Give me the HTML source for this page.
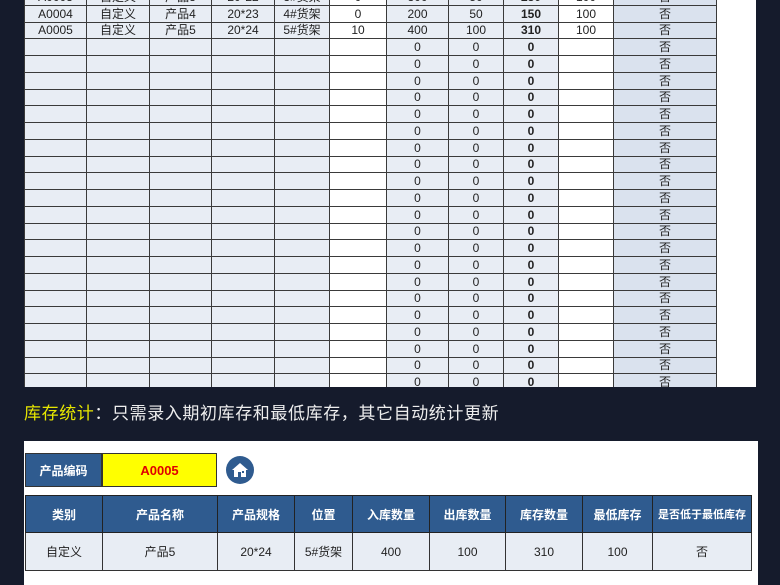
<!DOCTYPE html><html><head><meta charset="utf-8"><style>
*{margin:0;padding:0;box-sizing:border-box}
body{width:780px;height:585px;overflow:hidden;background:#151b2c;font-family:"Liberation Sans","Noto Sans CJK SC",sans-serif;position:relative}
.top{position:absolute;left:24px;top:-12px;width:732px;height:399px;background:#fff;overflow:hidden}
table{border-collapse:collapse;table-layout:fixed}
.t1 td{height:16.75px;border:1px solid #3a3a3a;font-size:12px;color:#222;text-align:center;background:#e8edf4;padding:0;line-height:14px}
.t1 td.w{background:#fff}
.t1 td.z{background:#dae2ee}
.t1 td.b{font-weight:bold}
.hd{position:absolute;left:24px;top:399px;font-size:17px;color:#eee;letter-spacing:0.6px;white-space:nowrap}
.hd span{color:#e6e600}
.panel{position:absolute;left:24px;top:441px;width:734px;height:144px;background:#fff}
.code{position:absolute;left:1px;top:12px;height:34px;display:flex}
.code div{display:flex;align-items:center;justify-content:center;font-size:12px;font-weight:bold}
.t2{position:absolute;left:1px;top:54px}
.t2 th{background:#2f5b8f;color:#fff;font-size:12px;height:37px;border:1px solid #222;font-weight:bold}
.t2 td{background:#e8edf4;color:#222;font-size:12px;height:38px;border:1px solid #333;text-align:center}
</style></head><body>
<div class="top"><table class="t1" style="width:692px">
<colgroup><col style="width:62px"><col style="width:63px"><col style="width:62px"><col style="width:63px"><col style="width:55px"><col style="width:57px"><col style="width:62px"><col style="width:55px"><col style="width:55px"><col style="width:55px"><col style="width:103px"></colgroup>
<tr><td>A0003</td><td>自定义</td><td>产品3</td><td>20*22</td><td>3#货架</td><td class="w">0</td><td>300</td><td>50</td><td class="b">250</td><td class="w">100</td><td class="z">否</td></tr>
<tr><td>A0004</td><td>自定义</td><td>产品4</td><td>20*23</td><td>4#货架</td><td class="w">0</td><td>200</td><td>50</td><td class="b">150</td><td class="w">100</td><td class="z">否</td></tr>
<tr><td>A0005</td><td>自定义</td><td>产品5</td><td>20*24</td><td>5#货架</td><td class="w">10</td><td>400</td><td>100</td><td class="b">310</td><td class="w">100</td><td class="z">否</td></tr>
<tr><td></td><td></td><td></td><td></td><td></td><td class="w"></td><td>0</td><td>0</td><td class="b">0</td><td class="w"></td><td class="z">否</td></tr>
<tr><td></td><td></td><td></td><td></td><td></td><td class="w"></td><td>0</td><td>0</td><td class="b">0</td><td class="w"></td><td class="z">否</td></tr>
<tr><td></td><td></td><td></td><td></td><td></td><td class="w"></td><td>0</td><td>0</td><td class="b">0</td><td class="w"></td><td class="z">否</td></tr>
<tr><td></td><td></td><td></td><td></td><td></td><td class="w"></td><td>0</td><td>0</td><td class="b">0</td><td class="w"></td><td class="z">否</td></tr>
<tr><td></td><td></td><td></td><td></td><td></td><td class="w"></td><td>0</td><td>0</td><td class="b">0</td><td class="w"></td><td class="z">否</td></tr>
<tr><td></td><td></td><td></td><td></td><td></td><td class="w"></td><td>0</td><td>0</td><td class="b">0</td><td class="w"></td><td class="z">否</td></tr>
<tr><td></td><td></td><td></td><td></td><td></td><td class="w"></td><td>0</td><td>0</td><td class="b">0</td><td class="w"></td><td class="z">否</td></tr>
<tr><td></td><td></td><td></td><td></td><td></td><td class="w"></td><td>0</td><td>0</td><td class="b">0</td><td class="w"></td><td class="z">否</td></tr>
<tr><td></td><td></td><td></td><td></td><td></td><td class="w"></td><td>0</td><td>0</td><td class="b">0</td><td class="w"></td><td class="z">否</td></tr>
<tr><td></td><td></td><td></td><td></td><td></td><td class="w"></td><td>0</td><td>0</td><td class="b">0</td><td class="w"></td><td class="z">否</td></tr>
<tr><td></td><td></td><td></td><td></td><td></td><td class="w"></td><td>0</td><td>0</td><td class="b">0</td><td class="w"></td><td class="z">否</td></tr>
<tr><td></td><td></td><td></td><td></td><td></td><td class="w"></td><td>0</td><td>0</td><td class="b">0</td><td class="w"></td><td class="z">否</td></tr>
<tr><td></td><td></td><td></td><td></td><td></td><td class="w"></td><td>0</td><td>0</td><td class="b">0</td><td class="w"></td><td class="z">否</td></tr>
<tr><td></td><td></td><td></td><td></td><td></td><td class="w"></td><td>0</td><td>0</td><td class="b">0</td><td class="w"></td><td class="z">否</td></tr>
<tr><td></td><td></td><td></td><td></td><td></td><td class="w"></td><td>0</td><td>0</td><td class="b">0</td><td class="w"></td><td class="z">否</td></tr>
<tr><td></td><td></td><td></td><td></td><td></td><td class="w"></td><td>0</td><td>0</td><td class="b">0</td><td class="w"></td><td class="z">否</td></tr>
<tr><td></td><td></td><td></td><td></td><td></td><td class="w"></td><td>0</td><td>0</td><td class="b">0</td><td class="w"></td><td class="z">否</td></tr>
<tr><td></td><td></td><td></td><td></td><td></td><td class="w"></td><td>0</td><td>0</td><td class="b">0</td><td class="w"></td><td class="z">否</td></tr>
<tr><td></td><td></td><td></td><td></td><td></td><td class="w"></td><td>0</td><td>0</td><td class="b">0</td><td class="w"></td><td class="z">否</td></tr>
<tr><td></td><td></td><td></td><td></td><td></td><td class="w"></td><td>0</td><td>0</td><td class="b">0</td><td class="w"></td><td class="z">否</td></tr>
<tr><td></td><td></td><td></td><td></td><td></td><td class="w"></td><td>0</td><td>0</td><td class="b">0</td><td class="w"></td><td class="z">否</td></tr>
</table></div>
<div class="hd"><span>库存统计</span>：只需录入期初库存和最低库存，其它自动统计更新</div>
<div class="panel">
<div class="code"><div style="width:77px;background:#2f5b8f;color:#fff;border:1px solid #333">产品编码</div><div style="width:115px;background:#ffff00;color:#e00000;font-size:13px;border:1px solid #333">A0005</div></div>
<svg style="position:absolute;left:202px;top:15px" width="28" height="28" viewBox="0 0 28 28"><circle cx="14" cy="14" r="14" fill="#2f5b8f"/><path d="M6 14 L14 7 L22 14 Z" fill="#fff"/><rect x="8" y="13" width="12" height="8" fill="#fff"/><rect x="12" y="16" width="3" height="5" fill="#2f5b8f"/><rect x="16" y="15" width="2" height="2" fill="#2f5b8f"/></svg>
<table class="t2" style="width:726px">
<colgroup><col style="width:77px"><col style="width:115px"><col style="width:77px"><col style="width:58px"><col style="width:77px"><col style="width:76px"><col style="width:77px"><col style="width:70px"><col style="width:99px"></colgroup>
<tr><th>类别</th><th>产品名称</th><th>产品规格</th><th>位置</th><th>入库数量</th><th>出库数量</th><th>库存数量</th><th>最低库存</th><th style="font-size:11px">是否低于最低库存</th></tr>
<tr><td>自定义</td><td>产品5</td><td>20*24</td><td>5#货架</td><td>400</td><td>100</td><td>310</td><td>100</td><td>否</td></tr>
</table>
</div>
</body></html>
